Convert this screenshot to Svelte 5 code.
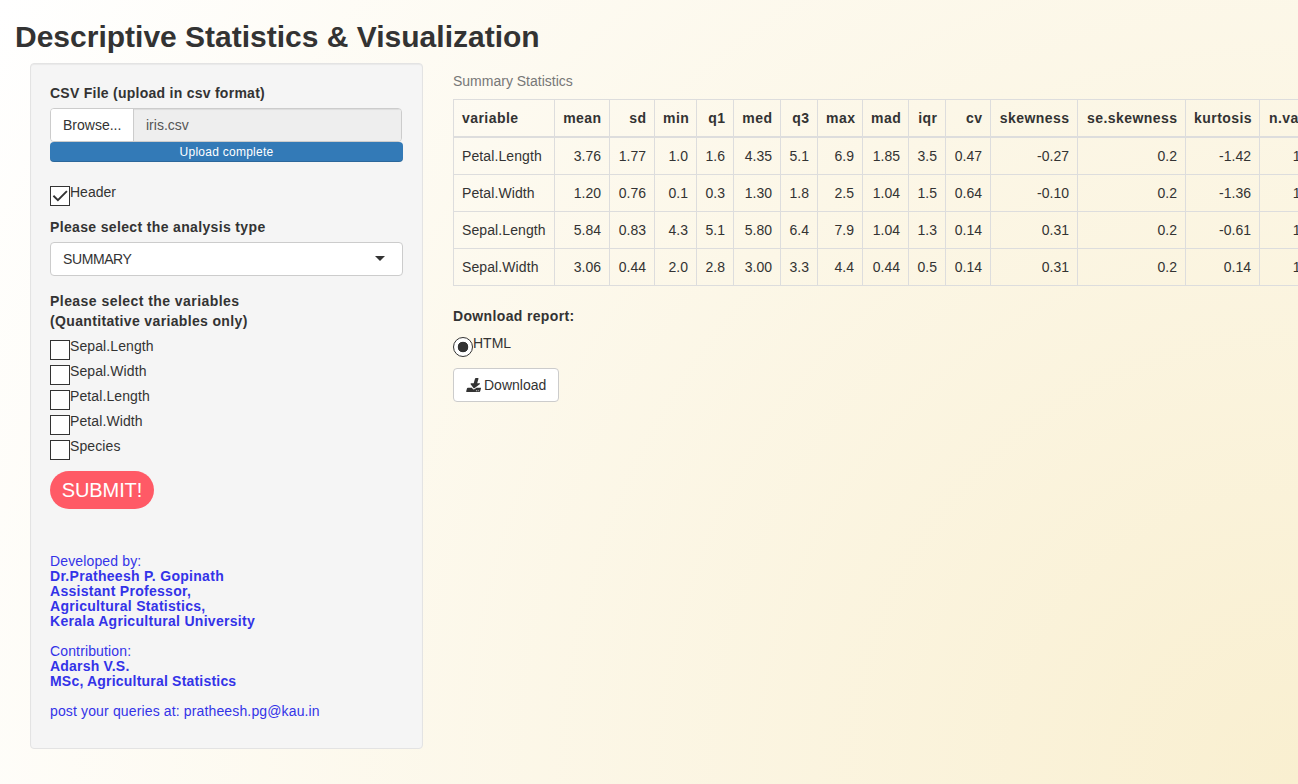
<script>
  const columns = [
    ['variable', 101], ['mean', 55], ['sd', 45], ['min', 42], ['q1', 37],
    ['med', 47], ['q3', 37], ['max', 45], ['mad', 46], ['iqr', 37],
    ['cv', 45], ['skewness', 87], ['se.skewness', 108], ['kurtosis', 74], ['n.valid', 65]
  ];
  const rows = [
    ['Petal.Length', '3.76', '1.77', '1.0', '1.6', '4.35', '5.1', '6.9', '1.85', '3.5', '0.47', '-0.27', '0.2', '-1.42', '150'],
    ['Petal.Width', '1.20', '0.76', '0.1', '0.3', '1.30', '1.8', '2.5', '1.04', '1.5', '0.64', '-0.10', '0.2', '-1.36', '150'],
    ['Sepal.Length', '5.84', '0.83', '4.3', '5.1', '5.80', '6.4', '7.9', '1.04', '1.3', '0.14', '0.31', '0.2', '-0.61', '150'],
    ['Sepal.Width', '3.06', '0.44', '2.0', '2.8', '3.00', '3.3', '4.4', '0.44', '0.5', '0.14', '0.31', '0.2', '0.14', '150']
  ];
  const variables = ['Sepal.Length', 'Sepal.Width', 'Petal.Length', 'Petal.Width', 'Species'];
</script>

<div class="page">
  <h1>Descriptive Statistics &amp; Visualization</h1>
  <div class="layout">
    <form class="sidebar" onsubmit={(e) => e.preventDefault()}>
      <b class="label tight">CSV File (upload in csv format)</b>
      <div class="file">
        <span class="browse">Browse...</span>
        <span class="filename">iris.csv</span>
      </div>
      <div class="progress">Upload complete</div>

      <label class="check header">
        <span class="box">
          <svg width="18" height="18" viewBox="0 0 18 18"><path d="M2.4 8.7 L6.9 13.1 L15.9 4.1" fill="none" stroke="#333" stroke-width="1.9" /></svg>
        </span>
        <span>Header</span>
      </label>

      <b class="label">Please select the analysis type</b>
      <div class="select">
        <span>SUMMARY</span>
        <i class="caret"></i>
      </div>

      <b class="label"><span class="wide">Please select the variables</span><br />(Quantitative variables only)</b>
      <div class="group">
        {#each variables as name}
          <label class="check"><span class="box"></span><span class="name">{name}</span></label>
        {/each}
      </div>

      <button class="submit">SUBMIT!</button>

      <div class="credits">
        <p>Developed by:<br /><b>Dr.Pratheesh P. Gopinath<br />Assistant Professor,<br />Agricultural Statistics,<br />Kerala Agricultural University</b></p>
        <p>Contribution:<br /><b class="tight">Adarsh V.S.<br />MSc, Agricultural Statistics</b></p>
        <p>post your queries at: pratheesh.pg@kau.in</p>
      </div>
    </form>

    <main>
      <div class="caption">Summary Statistics</div>
      <table>
        <colgroup>
          {#each columns as [, width]}<col style="width: {width}px" />{/each}
        </colgroup>
        <thead>
          <tr>{#each columns as [name]}<th>{name}</th>{/each}</tr>
        </thead>
        <tbody>
          {#each rows as row}
            <tr>{#each row as cell}<td>{cell}</td>{/each}</tr>
          {/each}
        </tbody>
      </table>

      <b class="label">Download report:</b>
      <label class="check radio"><span class="ring"></span><span>HTML</span></label>
      <button class="download">
        <svg width="14" height="14" viewBox="0 0 512 512" fill="#333">
          <path transform="translate(143 0) skewX(-15.6)" d="M216 0h80c13.300 0 24 10.700 24 24v168h87.700c17.800 0 26.700 21.500 14.100 34.100L269.700 378.300c-7.500 7.500-19.800 7.500-27.300 0L90.100 226.100c-12.600-12.600-3.700-34.100 14.100-34.100H192V24c0-13.300 10.700-24 24-24zm296 376v112c0 13.300-10.700 24-24 24H24c-13.300 0-24-10.700-24-24V376c0-13.300 10.700-24 24-24h146.700l49 49c20.100 20.100 52.500 20.100 72.600 0l49-49H488c13.300 0 24 10.700 24 24zm-124 88c0-11-9-20-20-20s-20 9-20 20 9 20 20 20 20-9 20-20zm64 0c0-11-9-20-20-20s-20 9-20 20 9 20 20 20 20-9 20-20z" />
        </svg>
        <span>Download</span>
      </button>
    </main>
  </div>
</div>

<style>
  :global(body) {
    margin: 0;
    overflow: hidden;
  }
  .page {
    box-sizing: border-box;
    height: 784px;
    overflow: hidden;
    padding: 16px 15px 0;
    color: #333;
    font: 14px/20px "Liberation Sans", Arial, sans-serif;
    background: radial-gradient(circle at bottom right, #f9efd0, #fff);
  }
  h1 {
    margin: 0;
    font-size: 30px;
    line-height: 41px;
    font-weight: 700;
  }
  .layout {
    display: flex;
    margin-top: 6px;
    padding-left: 15px;
    gap: 30px;
    align-items: flex-start;
  }
  .sidebar {
    box-sizing: border-box;
    flex: 0 0 393px;
    height: 686px;
    padding: 19px;
    background: #f5f5f5;
    border: 1px solid #e3e3e3;
    border-radius: 4px;
    box-shadow: inset 0 1px 1px rgba(0, 0, 0, 0.05);
  }
  .label {
    display: block;
    margin-bottom: 5px;
    letter-spacing: 0.35px;
  }
  .label.tight {
    letter-spacing: 0.26px;
  }
  .wide {
    letter-spacing: 0.45px;
  }
  .file {
    display: flex;
    box-sizing: border-box;
    width: 352px;
    height: 34px;
    border: 1px solid #ccc;
    border-radius: 4px;
    line-height: 32px;
    overflow: hidden;
  }
  .browse {
    box-sizing: border-box;
    width: 83px;
    padding-left: 12px;
    background: #fff;
    border-right: 1px solid #ccc;
  }
  .filename {
    flex: 1;
    padding-left: 12px;
    background: #eee;
    color: #555;
    box-shadow: inset 0 1px 1px rgba(0, 0, 0, 0.075);
  }
  .progress {
    height: 20px;
    background: #337ab7;
    border-radius: 4px;
    box-shadow: inset 0 -1px 0 rgba(0, 0, 0, 0.15);
    color: #fff;
    font-size: 12px;
    letter-spacing: 0.25px;
    text-align: center;
  }
  .check {
    display: flex;
    height: 20px;
    margin-bottom: 5px;
  }
  .name {
    letter-spacing: 0.1px;
  }
  .header {
    margin: 20px 0 15px;
  }
  .box {
    box-sizing: border-box;
    width: 20px;
    height: 20px;
    margin-top: 4px;
    border: 1px solid #333;
    background: #fff;
  }
  .box svg {
    display: block;
  }
  .select {
    display: flex;
    align-items: center;
    justify-content: space-between;
    box-sizing: border-box;
    height: 34px;
    margin-bottom: 15px;
    padding: 0 17px 0 12px;
    background: #fff;
    border: 1px solid #ccc;
    border-radius: 4px;
    letter-spacing: -0.4px;
  }
  .caret {
    margin-top: -2px;
    border: 5px solid transparent;
    border-top-color: #333;
    border-bottom: 0;
  }
  .submit {
    display: block;
    height: 38px;
    width: 104px;
    margin-top: 15px;
    padding: 0;
    border: 0;
    border-radius: 19px;
    background: #ff5a66;
    color: #fff;
    font: 20px/38px "Liberation Sans", Arial, sans-serif;
    letter-spacing: -0.1px;
  }
  .credits {
    margin-top: 45px;
    color: #3333e8;
    line-height: 15px;
    letter-spacing: 0.14px;
  }
  .credits b {
    letter-spacing: 0.29px;
  }
  .credits b.tight {
    letter-spacing: 0.2px;
  }
  .credits p {
    margin: 0 0 15px;
  }
  main {
    flex: none;
  }
  .caption {
    padding: 8px 0;
    color: #777;
  }
  table {
    table-layout: fixed;
    width: 871px;
    margin-bottom: 20px;
    border-collapse: collapse;
  }
  th,
  td {
    padding: 8px;
    border: 1px solid #ddd;
    text-align: right;
    line-height: 20px;
    white-space: nowrap;
  }
  th {
    border-bottom-width: 2px;
    padding-right: 7.5px;
    letter-spacing: 0.45px;
  }
  th:first-child,
  td:first-child {
    text-align: left;
  }
  td:first-child {
    letter-spacing: 0.1px;
  }
  .radio {
    margin: 7px 0 15px;
  }
  .ring {
    box-sizing: border-box;
    width: 20px;
    height: 20px;
    margin-top: 4px;
    border: 1px solid #333;
    border-radius: 50%;
    background: radial-gradient(circle, #333 5px, #fff 5.6px);
  }
  .download {
    display: flex;
    align-items: center;
    gap: 4px;
    box-sizing: border-box;
    width: 106px;
    height: 34px;
    padding: 0 12px;
    border: 1px solid #ccc;
    border-radius: 4px;
    background: #fff;
    color: #333;
    font: 14px/20px "Liberation Sans", Arial, sans-serif;
  }
  .download svg {
    overflow: visible;
  }
</style>
